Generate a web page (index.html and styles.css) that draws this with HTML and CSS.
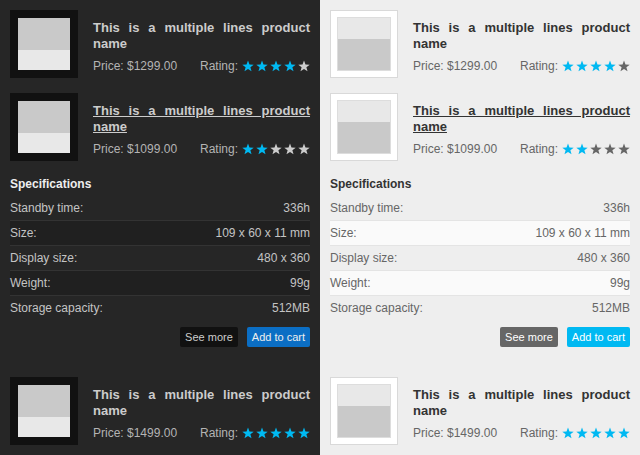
FILE: index.html
```html
<!DOCTYPE html>
<html>
<head>
<meta charset="utf-8">
<link rel="stylesheet" href="styles.css">
</head>
<body>
<div class="page">
  <section class="panel dark">
    <div class="item">
      <div class="thumb"><div class="img"></div></div>
      <div class="info">
        <div class="title">This is a multiple lines product name</div>
        <div class="meta">
          <span class="price">Price: $1299.00</span>
          <span class="rating">Rating:
            <span class="stars">
              <svg class="star on" viewBox="0 0 12 12"><polygon points="6,0.5 7.47,4.48 11.71,4.65 8.38,7.27 9.53,11.35 6,9 2.47,11.35 3.62,7.27 0.29,4.65 4.53,4.48"/></svg>
              <svg class="star on" viewBox="0 0 12 12"><polygon points="6,0.5 7.47,4.48 11.71,4.65 8.38,7.27 9.53,11.35 6,9 2.47,11.35 3.62,7.27 0.29,4.65 4.53,4.48"/></svg>
              <svg class="star on" viewBox="0 0 12 12"><polygon points="6,0.5 7.47,4.48 11.71,4.65 8.38,7.27 9.53,11.35 6,9 2.47,11.35 3.62,7.27 0.29,4.65 4.53,4.48"/></svg>
              <svg class="star on" viewBox="0 0 12 12"><polygon points="6,0.5 7.47,4.48 11.71,4.65 8.38,7.27 9.53,11.35 6,9 2.47,11.35 3.62,7.27 0.29,4.65 4.53,4.48"/></svg>
              <svg class="star" viewBox="0 0 12 12"><polygon points="6,0.5 7.47,4.48 11.71,4.65 8.38,7.27 9.53,11.35 6,9 2.47,11.35 3.62,7.27 0.29,4.65 4.53,4.48"/></svg>
            </span>
          </span>
        </div>
      </div>
    </div>
    <div class="item">
      <div class="thumb"><div class="img"></div></div>
      <div class="info">
        <div class="title hover">This is a multiple lines product name</div>
        <div class="meta">
          <span class="price">Price: $1099.00</span>
          <span class="rating">Rating:
            <span class="stars">
              <svg class="star on" viewBox="0 0 12 12"><polygon points="6,0.5 7.47,4.48 11.71,4.65 8.38,7.27 9.53,11.35 6,9 2.47,11.35 3.62,7.27 0.29,4.65 4.53,4.48"/></svg>
              <svg class="star on" viewBox="0 0 12 12"><polygon points="6,0.5 7.47,4.48 11.71,4.65 8.38,7.27 9.53,11.35 6,9 2.47,11.35 3.62,7.27 0.29,4.65 4.53,4.48"/></svg>
              <svg class="star" viewBox="0 0 12 12"><polygon points="6,0.5 7.47,4.48 11.71,4.65 8.38,7.27 9.53,11.35 6,9 2.47,11.35 3.62,7.27 0.29,4.65 4.53,4.48"/></svg>
              <svg class="star" viewBox="0 0 12 12"><polygon points="6,0.5 7.47,4.48 11.71,4.65 8.38,7.27 9.53,11.35 6,9 2.47,11.35 3.62,7.27 0.29,4.65 4.53,4.48"/></svg>
              <svg class="star" viewBox="0 0 12 12"><polygon points="6,0.5 7.47,4.48 11.71,4.65 8.38,7.27 9.53,11.35 6,9 2.47,11.35 3.62,7.27 0.29,4.65 4.53,4.48"/></svg>
            </span>
          </span>
        </div>
      </div>
    </div>
    <div class="specs">
      <h3 class="specs-title">Specifications</h3>
      <div class="row"><span>Standby time:</span><span>336h</span></div>
      <div class="row alt"><span>Size:</span><span>109 x 60 x 11 mm</span></div>
      <div class="row"><span>Display size:</span><span>480 x 360</span></div>
      <div class="row alt"><span>Weight:</span><span>99g</span></div>
      <div class="row"><span>Storage capacity:</span><span>512MB</span></div>
      <div class="actions">
        <button class="btn more">See more</button>
        <button class="btn cart">Add to cart</button>
      </div>
    </div>
    <div class="item">
      <div class="thumb"><div class="img"></div></div>
      <div class="info">
        <div class="title">This is a multiple lines product name</div>
        <div class="meta">
          <span class="price">Price: $1499.00</span>
          <span class="rating">Rating:
            <span class="stars">
              <svg class="star on" viewBox="0 0 12 12"><polygon points="6,0.5 7.47,4.48 11.71,4.65 8.38,7.27 9.53,11.35 6,9 2.47,11.35 3.62,7.27 0.29,4.65 4.53,4.48"/></svg>
              <svg class="star on" viewBox="0 0 12 12"><polygon points="6,0.5 7.47,4.48 11.71,4.65 8.38,7.27 9.53,11.35 6,9 2.47,11.35 3.62,7.27 0.29,4.65 4.53,4.48"/></svg>
              <svg class="star on" viewBox="0 0 12 12"><polygon points="6,0.5 7.47,4.48 11.71,4.65 8.38,7.27 9.53,11.35 6,9 2.47,11.35 3.62,7.27 0.29,4.65 4.53,4.48"/></svg>
              <svg class="star on" viewBox="0 0 12 12"><polygon points="6,0.5 7.47,4.48 11.71,4.65 8.38,7.27 9.53,11.35 6,9 2.47,11.35 3.62,7.27 0.29,4.65 4.53,4.48"/></svg>
              <svg class="star on" viewBox="0 0 12 12"><polygon points="6,0.5 7.47,4.48 11.71,4.65 8.38,7.27 9.53,11.35 6,9 2.47,11.35 3.62,7.27 0.29,4.65 4.53,4.48"/></svg>
            </span>
          </span>
        </div>
      </div>
    </div>
  </section>

  <section class="panel light">
    <div class="item">
      <div class="thumb"><div class="img"></div></div>
      <div class="info">
        <div class="title">This is a multiple lines product name</div>
        <div class="meta">
          <span class="price">Price: $1299.00</span>
          <span class="rating">Rating:
            <span class="stars">
              <svg class="star on" viewBox="0 0 12 12"><polygon points="6,0.5 7.47,4.48 11.71,4.65 8.38,7.27 9.53,11.35 6,9 2.47,11.35 3.62,7.27 0.29,4.65 4.53,4.48"/></svg>
              <svg class="star on" viewBox="0 0 12 12"><polygon points="6,0.5 7.47,4.48 11.71,4.65 8.38,7.27 9.53,11.35 6,9 2.47,11.35 3.62,7.27 0.29,4.65 4.53,4.48"/></svg>
              <svg class="star on" viewBox="0 0 12 12"><polygon points="6,0.5 7.47,4.48 11.71,4.65 8.38,7.27 9.53,11.35 6,9 2.47,11.35 3.62,7.27 0.29,4.65 4.53,4.48"/></svg>
              <svg class="star on" viewBox="0 0 12 12"><polygon points="6,0.5 7.47,4.48 11.71,4.65 8.38,7.27 9.53,11.35 6,9 2.47,11.35 3.62,7.27 0.29,4.65 4.53,4.48"/></svg>
              <svg class="star" viewBox="0 0 12 12"><polygon points="6,0.5 7.47,4.48 11.71,4.65 8.38,7.27 9.53,11.35 6,9 2.47,11.35 3.62,7.27 0.29,4.65 4.53,4.48"/></svg>
            </span>
          </span>
        </div>
      </div>
    </div>
    <div class="item">
      <div class="thumb"><div class="img"></div></div>
      <div class="info">
        <div class="title hover">This is a multiple lines product name</div>
        <div class="meta">
          <span class="price">Price: $1099.00</span>
          <span class="rating">Rating:
            <span class="stars">
              <svg class="star on" viewBox="0 0 12 12"><polygon points="6,0.5 7.47,4.48 11.71,4.65 8.38,7.27 9.53,11.35 6,9 2.47,11.35 3.62,7.27 0.29,4.65 4.53,4.48"/></svg>
              <svg class="star on" viewBox="0 0 12 12"><polygon points="6,0.5 7.47,4.48 11.71,4.65 8.38,7.27 9.53,11.35 6,9 2.47,11.35 3.62,7.27 0.29,4.65 4.53,4.48"/></svg>
              <svg class="star" viewBox="0 0 12 12"><polygon points="6,0.5 7.47,4.48 11.71,4.65 8.38,7.27 9.53,11.35 6,9 2.47,11.35 3.62,7.27 0.29,4.65 4.53,4.48"/></svg>
              <svg class="star" viewBox="0 0 12 12"><polygon points="6,0.5 7.47,4.48 11.71,4.65 8.38,7.27 9.53,11.35 6,9 2.47,11.35 3.62,7.27 0.29,4.65 4.53,4.48"/></svg>
              <svg class="star" viewBox="0 0 12 12"><polygon points="6,0.5 7.47,4.48 11.71,4.65 8.38,7.27 9.53,11.35 6,9 2.47,11.35 3.62,7.27 0.29,4.65 4.53,4.48"/></svg>
            </span>
          </span>
        </div>
      </div>
    </div>
    <div class="specs">
      <h3 class="specs-title">Specifications</h3>
      <div class="row"><span>Standby time:</span><span>336h</span></div>
      <div class="row alt"><span>Size:</span><span>109 x 60 x 11 mm</span></div>
      <div class="row"><span>Display size:</span><span>480 x 360</span></div>
      <div class="row alt"><span>Weight:</span><span>99g</span></div>
      <div class="row"><span>Storage capacity:</span><span>512MB</span></div>
      <div class="actions">
        <button class="btn more">See more</button>
        <button class="btn cart">Add to cart</button>
      </div>
    </div>
    <div class="item">
      <div class="thumb"><div class="img"></div></div>
      <div class="info">
        <div class="title">This is a multiple lines product name</div>
        <div class="meta">
          <span class="price">Price: $1499.00</span>
          <span class="rating">Rating:
            <span class="stars">
              <svg class="star on" viewBox="0 0 12 12"><polygon points="6,0.5 7.47,4.48 11.71,4.65 8.38,7.27 9.53,11.35 6,9 2.47,11.35 3.62,7.27 0.29,4.65 4.53,4.48"/></svg>
              <svg class="star on" viewBox="0 0 12 12"><polygon points="6,0.5 7.47,4.48 11.71,4.65 8.38,7.27 9.53,11.35 6,9 2.47,11.35 3.62,7.27 0.29,4.65 4.53,4.48"/></svg>
              <svg class="star on" viewBox="0 0 12 12"><polygon points="6,0.5 7.47,4.48 11.71,4.65 8.38,7.27 9.53,11.35 6,9 2.47,11.35 3.62,7.27 0.29,4.65 4.53,4.48"/></svg>
              <svg class="star on" viewBox="0 0 12 12"><polygon points="6,0.5 7.47,4.48 11.71,4.65 8.38,7.27 9.53,11.35 6,9 2.47,11.35 3.62,7.27 0.29,4.65 4.53,4.48"/></svg>
              <svg class="star on" viewBox="0 0 12 12"><polygon points="6,0.5 7.47,4.48 11.71,4.65 8.38,7.27 9.53,11.35 6,9 2.47,11.35 3.62,7.27 0.29,4.65 4.53,4.48"/></svg>
            </span>
          </span>
        </div>
      </div>
    </div>
  </section>
</div>
</body>
</html>
```

FILE: styles.css
```css
* { box-sizing: border-box; }
html, body { margin: 0; padding: 0; }
body {
  font-family: "Liberation Sans", Arial, sans-serif;
  font-size: 12px;
  width: 640px;
  height: 455px;
  overflow: hidden;
}
.page {
  display: grid;
  grid-template-columns: 320px 320px;
  height: 455px;
}
.panel {
  padding: 10px;
  overflow: hidden;
}
.dark { background: #262626; }
.light { background: #eeeeee; }

.item {
  display: flex;
  align-items: flex-start;
  gap: 15px;
  margin-bottom: 15px;
}
.thumb {
  width: 68px;
  height: 68px;
  flex: none;
}
.img {
  width: 52px;
  height: 52px;
}
.dark .thumb {
  background: #111111;
  padding: 8px;
}
.dark .img {
  background: linear-gradient(#c9c9c9 0, #c9c9c9 32px, #e8e8e8 32px);
}
.light .thumb {
  background: #ffffff;
  border: 1px solid #d9d9d9;
  padding: 6px;
}
.light .img {
  width: 54px;
  height: 54px;
  border: 1px solid #dddddd;
  background: linear-gradient(#e8e8e8 0, #e8e8e8 21px, #c9c9c9 21px);
}

.info {
  flex: 1;
  padding-top: 10px;
}
.title {
  font-size: 13px;
  font-weight: bold;
  line-height: 16px;
  text-align: justify;
}
.title.hover { text-decoration: underline; }
.dark .title { color: #cccccc; }
.light .title { color: #333333; }

.meta {
  display: flex;
  justify-content: space-between;
  align-items: center;
  margin-top: 6px;
  line-height: 16px;
}
.dark .meta { color: #b4b4b4; }
.light .meta { color: #666666; }
.rating {
  display: inline-flex;
  align-items: center;
  gap: 4px;
}
.stars {
  display: inline-flex;
  gap: 2px;
}
.star {
  width: 12px;
  height: 12px;
  display: block;
}
.star.on { fill: #00b9f2; }
.dark .star { fill: #cccccc; }
.light .star { fill: #666666; }
.dark .star.on, .light .star.on { fill: #00b9f2; }

.specs {
  margin-bottom: 30px;
}
.specs-title {
  margin: 0 0 3px;
  font-size: 12px;
  line-height: 16px;
  font-weight: bold;
}
.dark .specs-title { color: #eeeeee; }
.light .specs-title { color: #333333; }

.row {
  display: flex;
  justify-content: space-between;
  line-height: 24px;
  border-top: 1px solid transparent;
}
.row + .row { border-top-color: #333333; }
.dark .row { color: #c4c4c4; }
.dark .row.alt { background: #202020; }
.light .row { color: #666666; }
.light .row + .row { border-top-color: #e4e4e4; }
.light .row.alt { background: #fafafa; }

.actions {
  display: flex;
  justify-content: flex-end;
  gap: 9px;
  margin-top: 7px;
}
.btn {
  font-family: "Liberation Sans", Arial, sans-serif;
  font-size: 11px;
  height: 20px;
  line-height: 20px;
  padding: 0 5px;
  border: 0;
  border-radius: 2px;
  cursor: pointer;
}
.dark .btn.more { background: #111111; color: #cccccc; }
.dark .btn.cart { background: #0b6ec4; color: #eeeeee; }
.light .btn.more { background: #666666; color: #ffffff; }
.light .btn.cart { background: #00b9f2; color: #ffffff; }
```
